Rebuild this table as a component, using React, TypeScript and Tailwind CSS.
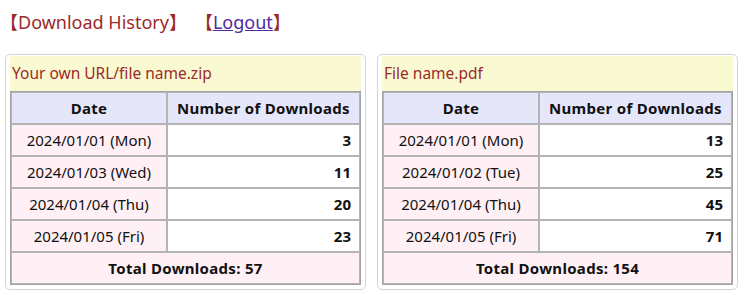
const font = { fontFamily: '"Noto Sans", "Noto Sans CJK JP", sans-serif' };

type Row = { date: string; count: number };

const files: { name: string; rows: Row[] }[] = [
  {
    name: "Your own URL/file name.zip",
    rows: [
      { date: "2024/01/01 (Mon)", count: 3 },
      { date: "2024/01/03 (Wed)", count: 11 },
      { date: "2024/01/04 (Thu)", count: 20 },
      { date: "2024/01/05 (Fri)", count: 23 },
    ],
  },
  {
    name: "File name.pdf",
    rows: [
      { date: "2024/01/01 (Mon)", count: 13 },
      { date: "2024/01/02 (Tue)", count: 25 },
      { date: "2024/01/04 (Thu)", count: 45 },
      { date: "2024/01/05 (Fri)", count: 71 },
    ],
  },
];

function HistoryCard({ name, rows }: { name: string; rows: Row[] }) {
  const total = rows.reduce((sum, row) => sum + row.count, 0);
  return (
    <div className="flex-1 rounded-[5px] border border-[#d4d4d4] px-[4px] pb-[4px] pt-[1px]">
      <div className="flex h-[35px] items-center bg-[#fafad2] pl-[2px] pt-[1px] text-[15.5px] text-[#9c2a2a]">
        {name}
      </div>
      <table className="w-full border-separate border-spacing-0 border border-[#a3a3a3] text-[15px] text-[#111]">
        <thead>
          <tr className="h-[32px] bg-[#e6e6fa]">
            <th className="w-[156px] border border-[#b4b4b4] font-bold tracking-[0.3px]">Date</th>
            <th className="border border-[#b4b4b4] font-bold tracking-[0.3px]">Number of Downloads</th>
          </tr>
        </thead>
        <tbody>
          {rows.map((row) => (
            <tr key={row.date} className="h-[32px]">
              <td className="border border-[#b4b4b4] bg-[#fff0f5] text-center">{row.date}</td>
              <td className="border border-[#b4b4b4] bg-white pr-[8px] text-right font-bold">{row.count}</td>
            </tr>
          ))}
          <tr className="h-[32px]">
            <td colSpan={2} className="border border-[#b4b4b4] bg-[#fff0f5] text-center font-bold tracking-[0.3px]">
              Total Downloads: {total}
            </td>
          </tr>
        </tbody>
      </table>
    </div>
  );
}

export default function App() {
  return (
    <div className="h-[295px] w-[744px] bg-white px-[5px] pr-[6px]" style={font}>
      <div className="-ml-[5px] flex h-[54px] items-start pt-[9px] text-[18px] text-[#9c2a2a]">
        <span>【Download History】</span>
        <span className="ml-[8px]">
          【<a href="#" className="text-[#4f2a9c] underline">Logout</a>】
        </span>
      </div>
      <div className="flex gap-[11px]">
        {files.map((file) => (
          <HistoryCard key={file.name} name={file.name} rows={file.rows} />
        ))}
      </div>
    </div>
  );
}
